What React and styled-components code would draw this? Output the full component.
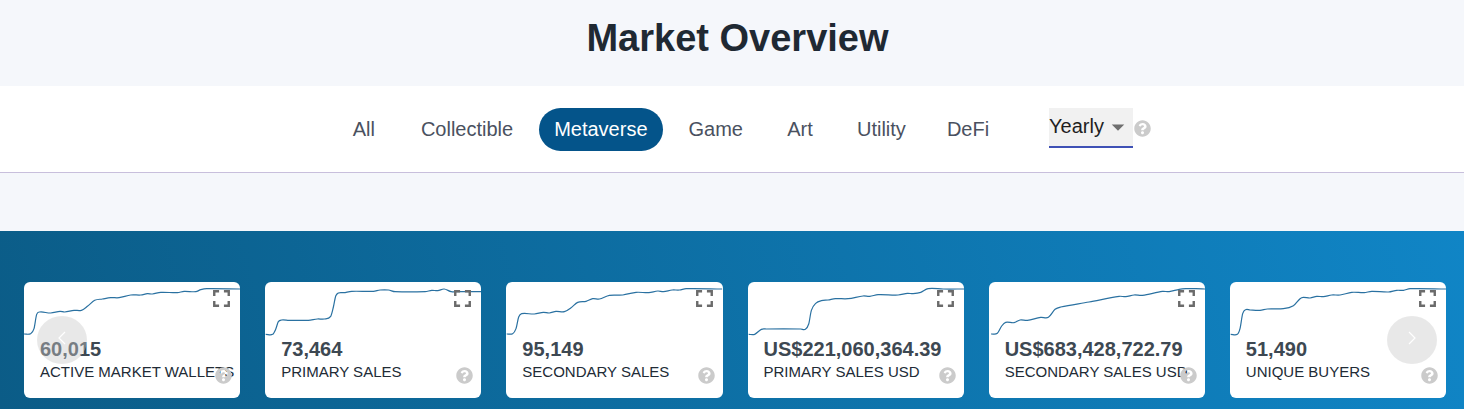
import React, { useState } from "react";
import styled, { createGlobalStyle } from "styled-components";
import { FaQuestionCircle } from "react-icons/fa";
import { MdFullscreen, MdArrowDropDown } from "react-icons/md";

const GlobalStyle = createGlobalStyle`
  *, *::before, *::after { box-sizing: border-box; }
  body {
    margin: 0;
    background: #f5f7fb;
    color: #212b36;
    font-family: "Liberation Sans", Arial, sans-serif;
  }
  button, select { font-family: inherit; }
`;

const Title = styled.h1`
  margin: 0;
  padding: 16px 0 26px 11px;
  color: #1f2933;
  font-size: 38px;
  line-height: 44px;
  font-weight: 700;
  text-align: center;
`;

const FilterBar = styled.nav`
  display: flex;
  justify-content: center;
  align-items: flex-start;
  gap: 45px;
  padding: 22px 0 21px 20px;
  background: #fff;
  border-bottom: 1px solid #c8bfdc;
`;

const Tabs = styled.div`
  display: flex;
  gap: 11px;
`;

const Tab = styled.button`
  min-width: 62px;
  height: 43px;
  padding: 0 15px 2px;
  border: 0;
  border-radius: 22px;
  background: ${(p) => (p.$active ? "#04548a" : "transparent")};
  color: ${(p) => (p.$active ? "#fff" : "#4a5160")};
  font-size: 20px;
  line-height: 24px;
  cursor: pointer;
`;

const PeriodGroup = styled.div`
  display: flex;
  align-items: center;
  gap: 1px;
`;

const SelectWrap = styled.div`
  position: relative;
  width: 84px;
  color: #6f6f6f;
  svg {
    position: absolute;
    right: 0;
    top: 4px;
    pointer-events: none;
  }
`;

const PeriodSelect = styled.select`
  display: block;
  appearance: none;
  width: 100%;
  height: 40px;
  padding: 0 0 2px;
  border: 0;
  border-bottom: 2px solid #3f51b5;
  border-radius: 0;
  background: #f1f1f1;
  color: #1f1f1f;
  font-size: 20px;
`;

const HelpButton = styled.button`
  display: flex;
  padding: 0;
  border: 0;
  border-radius: 50%;
  background: transparent;
  color: #cbcbcb;
  cursor: pointer;
`;

const Band = styled.section`
  position: relative;
  margin-top: 58px;
  padding: 51px 18px 11px 24px;
  background: linear-gradient(75deg, #0b5c87 0%, #1085c6 100%);
`;

const CardGrid = styled.div`
  display: grid;
  grid-template-columns: repeat(6, minmax(0, 1fr));
  gap: 25px;
`;

const Card = styled.article`
  position: relative;
  height: 116px;
  border-radius: 6px;
  background: #fff;
  overflow: hidden;
`;

const Spark = styled.svg`
  display: block;
  width: 100%;
  height: 55px;
`;

const Value = styled.div`
  padding-left: 16px;
  color: #3d4852;
  font-size: 20px;
  line-height: 24px;
  font-weight: 700;
  white-space: nowrap;
`;

const Label = styled.div`
  padding-left: 16px;
  color: #212b36;
  font-size: 15px;
  line-height: 22px;
  white-space: nowrap;
`;

const ExpandButton = styled.button`
  position: absolute;
  top: 2px;
  right: 4px;
  display: flex;
  padding: 0;
  border: 0;
  background: transparent;
  color: #6b6b6b;
  cursor: pointer;
`;

const CardHelp = styled(HelpButton)`
  position: absolute;
  right: 8px;
  bottom: 14px;
`;

const ArrowButton = styled.button`
  position: absolute;
  top: 85px;
  ${(p) => (p.$side === "left" ? "left: 37px;" : "right: 27px;")}
  display: flex;
  align-items: center;
  justify-content: center;
  width: 50px;
  height: 48px;
  padding: 0 0 4px;
  border: 0;
  border-radius: 50%;
  background: rgba(200, 200, 200, 0.42);
  color: #fff;
  cursor: pointer;
`;

const categories = ["All", "Collectible", "Metaverse", "Game", "Art", "Utility", "DeFi"];

const metrics = [
  {
    value: "60,015",
    label: "ACTIVE MARKET WALLETS",
    trend: [[0, 156], [20, 155], [30, 140], [38, 97], [48, 90], [80, 93], [108, 88], [122, 90], [150, 85], [172, 85], [190, 73], [212, 55], [235, 51], [260, 47], [285, 47], [320, 39], [350, 39], [370, 35], [385, 36], [410, 31], [460, 32], [480, 28], [515, 29], [530, 23], [548, 20], [648, 21]],
  },
  {
    value: "73,464",
    label: "PRIMARY SALES",
    trend: [[2, 157], [23, 157], [32, 142], [40, 119], [50, 114], [72, 115], [130, 115], [157, 111], [178, 111], [197, 103], [205, 75], [212, 42], [220, 33], [236, 32], [260, 28], [325, 28], [345, 24], [370, 24], [390, 29], [480, 29], [500, 25], [518, 26], [537, 21], [558, 29], [580, 29], [648, 29]],
  },
  {
    value: "95,149",
    label: "SECONDARY SALES",
    trend: [[2, 156], [20, 155], [30, 140], [38, 105], [47, 95], [85, 96], [112, 91], [130, 93], [150, 88], [175, 89], [195, 77], [215, 61], [240, 58], [260, 50], [280, 51], [310, 40], [350, 39], [390, 31], [428, 32], [455, 27], [472, 29], [498, 24], [520, 24], [540, 20], [648, 21]],
  },
  {
    value: "US$221,060,364.39",
    label: "PRIMARY SALES USD",
    trend: [[2, 157], [20, 157], [40, 142], [55, 141], [158, 141], [172, 142], [182, 126], [190, 85], [203, 64], [220, 56], [240, 54], [262, 50], [300, 50], [345, 42], [365, 43], [390, 38], [450, 39], [478, 34], [495, 35], [518, 31], [540, 20], [585, 21], [648, 21]],
  },
  {
    value: "US$683,428,722.79",
    label: "SECONDARY SALES USD",
    trend: [[6, 156], [25, 154], [38, 132], [50, 121], [75, 122], [93, 114], [115, 115], [155, 106], [178, 106], [198, 82], [215, 75], [300, 60], [390, 43], [410, 44], [435, 39], [460, 40], [520, 28], [540, 29], [570, 22], [590, 20], [620, 20], [648, 21]],
  },
  {
    value: "51,490",
    label: "UNIQUE BUYERS",
    trend: [[2, 157], [22, 157], [30, 140], [38, 95], [47, 83], [60, 84], [90, 85], [112, 81], [160, 80], [190, 71], [210, 50], [220, 46], [240, 48], [260, 43], [280, 44], [305, 39], [330, 39], [365, 31], [402, 32], [425, 28], [475, 30], [500, 25], [520, 25], [540, 20], [648, 21]],
  },
];

function toCurve(points) {
  let d = `M${points[0].join(" ")}`;
  for (let i = 0; i < points.length - 1; i += 1) {
    const a = points[i - 1] || points[i];
    const b = points[i];
    const c = points[i + 1];
    const e = points[i + 2] || c;
    const third = (c[0] - b[0]) / 3;
    const slopeB = (c[1] - a[1]) / (c[0] - a[0]);
    const slopeC = (e[1] - b[1]) / (e[0] - b[0]);
    d += `C${b[0] + third} ${b[1] + slopeB * third} ${c[0] - third} ${c[1] - slopeC * third} ${c[0]} ${c[1]}`;
  }
  return d;
}

function MetricCard({ value, label, trend }) {
  return (
    <Card>
      <Spark viewBox="0 0 648 165" preserveAspectRatio="none" aria-hidden="true">
        <path d={toCurve(trend)} fill="none" stroke="#2a71a1" strokeWidth="3.6" />
      </Spark>
      <Value>{value}</Value>
      <Label>{label}</Label>
      <ExpandButton type="button" aria-label={`Expand ${label}`}>
        <MdFullscreen size={29} />
      </ExpandButton>
      <CardHelp type="button" aria-label={`About ${label}`}>
        <FaQuestionCircle size={17} />
      </CardHelp>
    </Card>
  );
}

function Chevron({ d }) {
  return (
    <svg width="10" height="14" viewBox="0 0 10 14" fill="none" stroke="currentColor" strokeWidth="1.2" aria-hidden="true">
      <path d={d} />
    </svg>
  );
}

export default function App() {
  const [category, setCategory] = useState("Metaverse");
  return (
    <main>
      <GlobalStyle />
      <Title>Market Overview</Title>
      <FilterBar>
        <Tabs>
          {categories.map((name) => (
            <Tab key={name} type="button" $active={name === category} onClick={() => setCategory(name)}>
              {name}
            </Tab>
          ))}
        </Tabs>
        <PeriodGroup>
          <SelectWrap>
            <PeriodSelect aria-label="Period" defaultValue="Yearly">
              <option>Yearly</option>
              <option>Monthly</option>
              <option>Weekly</option>
            </PeriodSelect>
            <MdArrowDropDown size={30} />
          </SelectWrap>
          <HelpButton type="button" aria-label="About the period">
            <FaQuestionCircle size={17} />
          </HelpButton>
        </PeriodGroup>
      </FilterBar>
      <Band>
        <CardGrid>
          {metrics.map((metric) => (
            <MetricCard key={metric.label} {...metric} />
          ))}
        </CardGrid>
        <ArrowButton type="button" $side="left" aria-label="Previous">
          <Chevron d="M8 1 2 7l6 6" />
        </ArrowButton>
        <ArrowButton type="button" $side="right" aria-label="Next">
          <Chevron d="M2 1l6 6-6 6" />
        </ArrowButton>
      </Band>
    </main>
  );
}
